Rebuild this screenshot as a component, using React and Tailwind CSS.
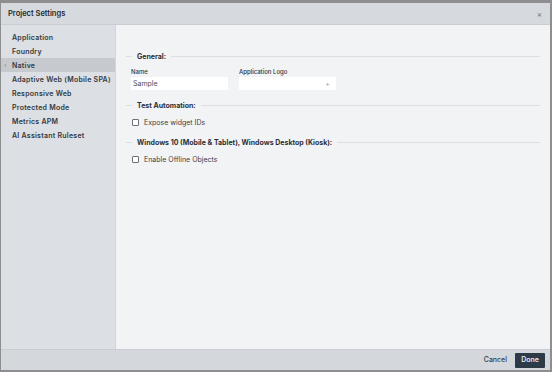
import React from "react";

const items = [
  "Application",
  "Foundry",
  "Native",
  "Adaptive Web (Mobile SPA)",
  "Responsive Web",
  "Protected Mode",
  "Metrics APM",
  "AI Assistant Ruleset",
];

function Section({ title }) {
  return (
    <div className="flex items-center h-[12px]">
      <div className="w-[6px] h-px bg-[#dcdee2]" />
      <div className="px-[5px] text-[7px] font-bold text-[#2b2f36] leading-none">{title}</div>
      <div className="flex-1 h-px bg-[#dcdee2]" />
    </div>
  );
}

function Check({ label }) {
  return (
    <div className="flex items-center h-[12px] pl-[6px]">
      <div className="w-[7px] h-[7px] border border-[#6b7079] bg-white rounded-[1px]" />
      <div className="ml-[5px] text-[7px] text-[#3c4048] leading-none">{label}</div>
    </div>
  );
}

export default function App() {
  return (
    <div
      className="w-[552px] h-[372px] flex flex-col bg-[#f2f3f5] border-t-[3px] border-l border-r-2 border-b-2 border-[#8e8e8e]"
      style={{ fontFamily: "Inter, 'Noto Sans', sans-serif" }}
    >
      <div className="h-[22px] shrink-0 bg-[#d6d9dd] flex items-center justify-between pl-[7px] pr-[8px] border-b border-[#c9ccd1]">
        <div className="text-[7.5px] font-semibold text-[#23272e]">Project Settings</div>
        <div className="text-[8px] text-[#6b6f76] leading-none">×</div>
      </div>
      <div className="flex flex-1 min-h-0">
        <div className="w-[115px] shrink-0 bg-[#dcdfe3] pt-[5px] border-r border-[#d2d5da]">
          {items.map((t) => (
            <div
              key={t}
              className={
                "h-[14px] flex items-center pl-[11px] relative text-[7px] font-semibold tracking-[0.25px] text-[#343940] leading-none " +
                (t === "Native" ? "bg-[#c6cace]" : "")
              }
            >
              {t === "Native" && (
                <span className="absolute left-[3px] text-[6px] text-[#8a8e95]">›</span>
              )}
              {t}
            </div>
          ))}
        </div>
        <div className="flex-1 pl-[10px] pr-[10px] pt-[25px]">
          <Section title="General:" />
          <div className="flex gap-[11px] pl-[5px] mt-[7px]">
            <div className="flex flex-col">
              <div className="text-[6px] font-medium text-[#2f343b] leading-none h-[7px]">Name</div>
              <div className="mt-[1px] w-[97px] h-[13px] bg-white flex items-center pl-[2px] text-[7px] text-[#4a4e55] leading-none">
                Sample
              </div>
            </div>
            <div className="flex flex-col">
              <div className="text-[6px] font-medium text-[#2f343b] leading-none h-[7px]">Application Logo</div>
              <div className="mt-[1px] w-[97px] h-[13px] bg-white flex items-center justify-end pr-[6px] text-[7px] text-[#9aa0a8] leading-none">
                +
              </div>
            </div>
          </div>
          <div className="mt-[9px]">
            <Section title="Test Automation:" />
          </div>
          <div className="mt-[5px]">
            <Check label="Expose widget IDs" />
          </div>
          <div className="mt-[8px]">
            <Section title="Windows 10 (Mobile & Tablet), Windows Desktop (Kiosk):" />
          </div>
          <div className="mt-[5px]">
            <Check label="Enable Offline Objects" />
          </div>
        </div>
      </div>
      <div className="h-[21px] shrink-0 bg-[#d4d7db] border-t border-[#c9ccd1] flex items-center justify-end pr-[5px] gap-[8px]">
        <div className="text-[7px] font-medium text-[#3b3f46]">Cancel</div>
        <div className="h-[15px] w-[30px] bg-[#2d3a48] rounded-[1px] flex items-center justify-center text-[7px] font-semibold text-[#e6e9ee]">
          Done
        </div>
      </div>
    </div>
  );
}
